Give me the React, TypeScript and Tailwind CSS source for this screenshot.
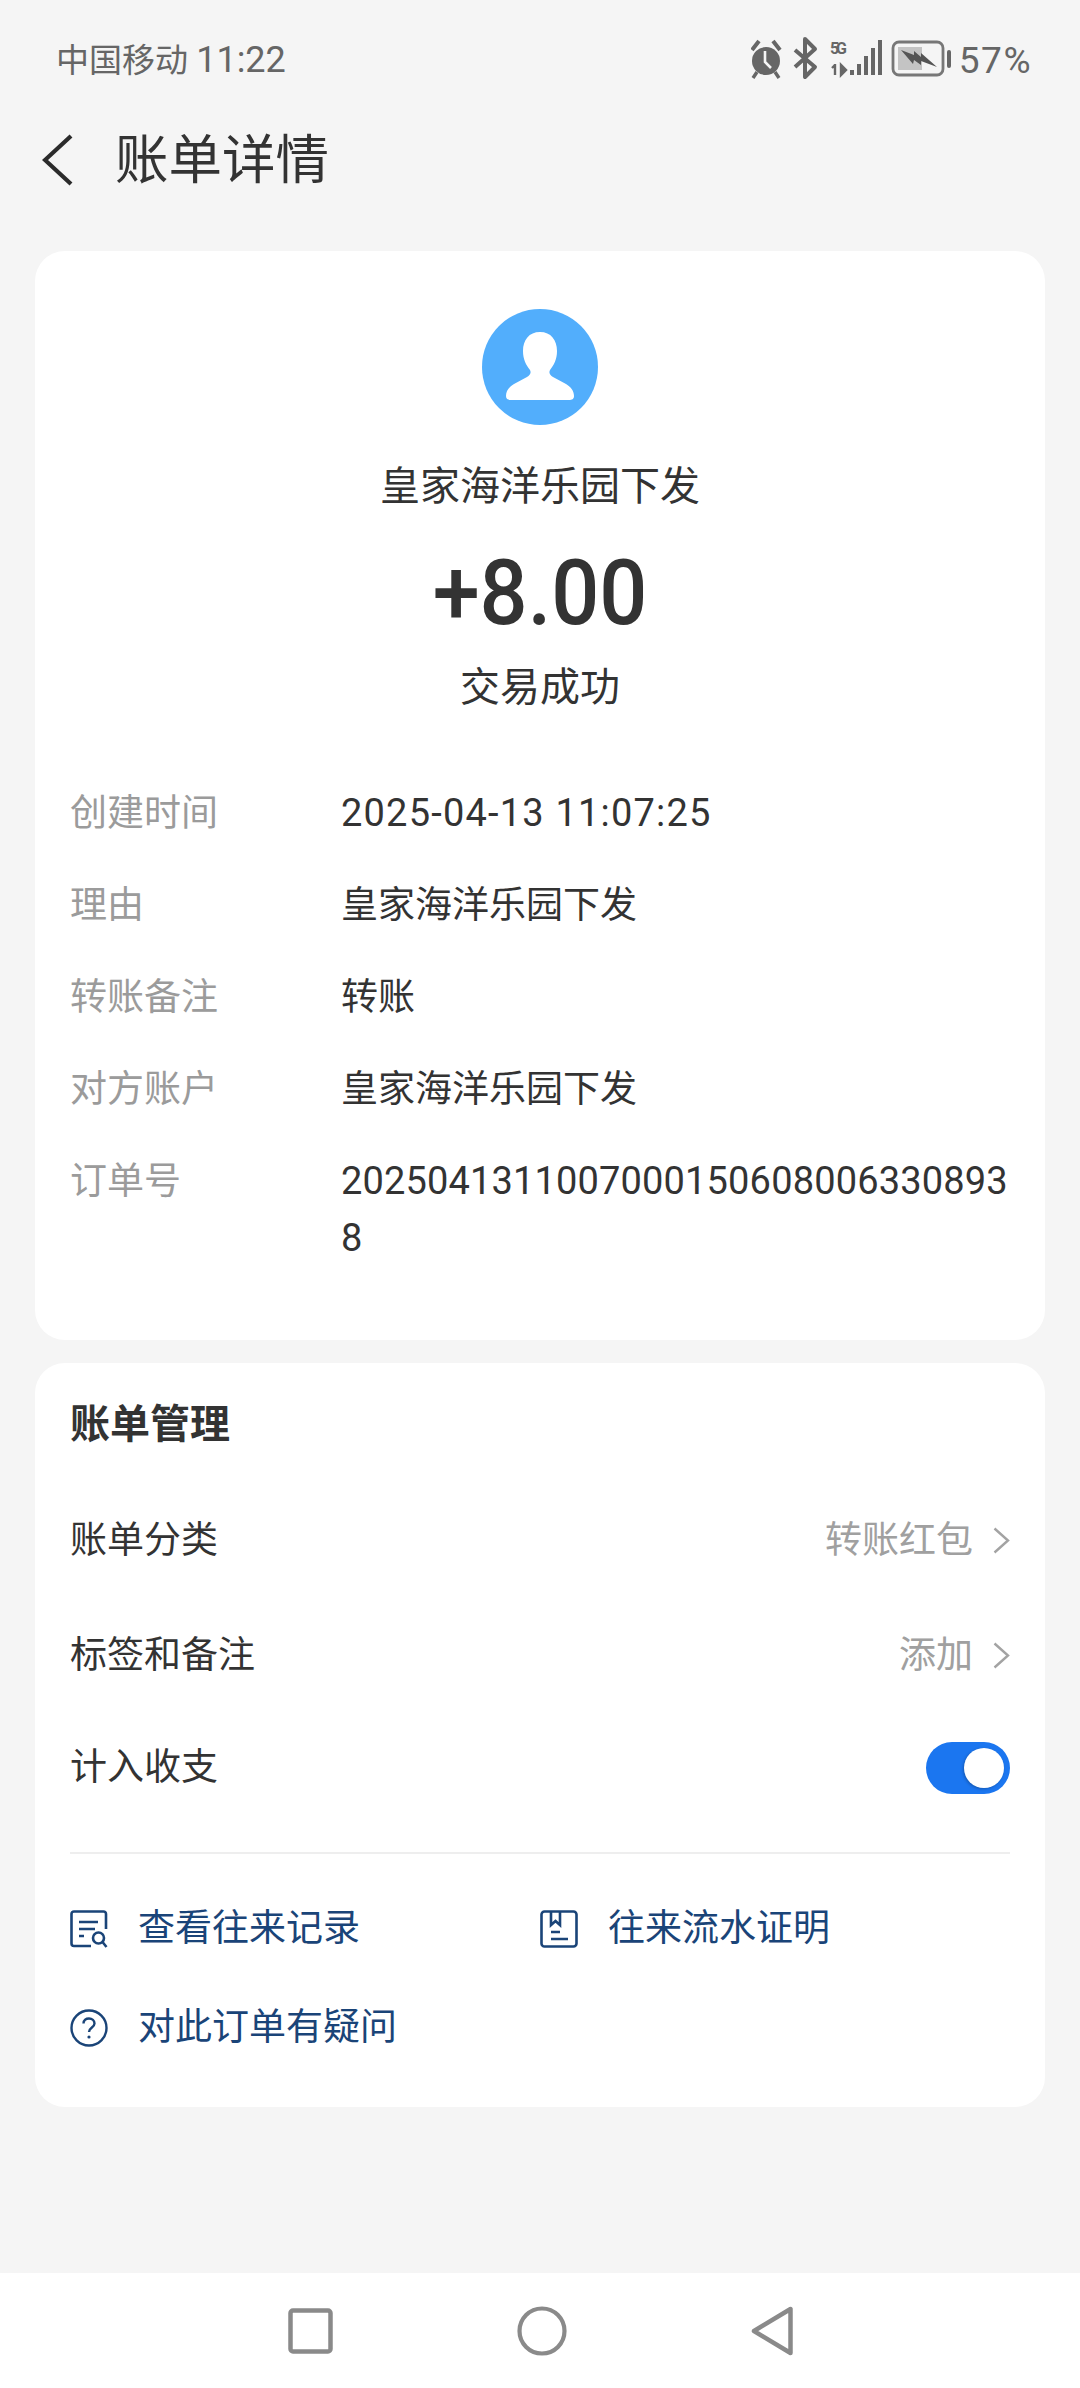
const font = { fontFamily: '"Roboto","Noto Sans CJK SC",sans-serif' };

function Chevron() {
  return (
    <svg width="17" height="27" viewBox="0 0 17 27" fill="none" stroke="#a3a3a3" strokeWidth="2.4" className="ml-[20px]">
      <path d="M1.5 1.5 L15 13.5 L1.5 25.5" />
    </svg>
  );
}

function Row({ label, children }: { label: string; children: React.ReactNode }) {
  return (
    <div className="flex items-start">
      <div className="w-[271px] shrink-0 text-[#9b9b9b]">{label}</div>
      <div className="w-[672px] break-all text-[#333]">{children}</div>
    </div>
  );
}

function StatusIcons() {
  return (
    <svg width="202" height="46" viewBox="0 0 202 46" className="shrink-0">
      <g fill="#666" stroke="#666">
        <circle cx="15" cy="24" r="14" stroke="none" />
        <path d="M1 13 L8 4 M29 13 L22 4" strokeWidth="4" fill="none" />
        <path d="M6 35 L2 41 M24 35 L28 41" strokeWidth="3.4" fill="none" />
      </g>
      <path d="M14 14 V25 L20 31" stroke="#f5f5f5" strokeWidth="2.6" fill="none" />
      <path d="M44 13 L64 30 L54 40 V2 L64 12 L44 30" stroke="#666" strokeWidth="4" fill="none" strokeLinejoin="round" />
      <text x="79" y="17" fontSize="16" fontWeight="700" fill="#666" fontFamily="Roboto,sans-serif" textLength="17">5G</text>
      <path d="M84 28 L81 31 M84 27 V38 M90 28 V38 L95 33 Z" stroke="#666" strokeWidth="2.4" fill="#666" />
      <g fill="#666">
        <rect x="99" y="33" width="4" height="5" />
        <rect x="106" y="27" width="4" height="11" />
        <rect x="113" y="19" width="4" height="19" />
        <rect x="120" y="11" width="4" height="27" />
        <rect x="127" y="3" width="4" height="35" />
      </g>
      <rect x="142" y="5" width="50" height="33" rx="6" fill="none" stroke="#777" strokeWidth="2.8" />
      <rect x="147" y="10" width="24" height="23" fill="#c4c4c4" />
      <path d="M150 13 L163 18 L163 14 L170 20 L170 16 L186 30 L170 24 L170 28 L163 23 L162 27 Z" fill="#555" />
      <rect x="196" y="13" width="4" height="18" rx="2" fill="#666" />
    </svg>
  );
}

function PersonAvatar() {
  return (
    <svg width="116" height="116" viewBox="0 0 116 116" className="block mx-auto">
      <circle cx="58" cy="58" r="58" fill="#52aefc" />
      <path
        d="M58 23 C47 23 41 31 41 42 C41 50 44 56 48 61 C49.500 64 48 66 45 68 L32 75 C27 78 24 82 24 87 C24 90 26 91 29 91 H87 C90 91 92 90 92 87 C92 82 89 78 84 75 L71 68 C68 66 66.500 64 68 61 C72 56 75 50 75 42 C75 31 69 23 58 23 Z"
        fill="#fff"
      />
    </svg>
  );
}

function RecordIcon() {
  return (
    <svg width="38" height="38" viewBox="0 0 38 38" fill="none" stroke="#1a4478" strokeWidth="2.6" className="shrink-0">
      <path d="M36 19 V4 C36 2.500 35 1.500 33.500 1.500 H4 C2.500 1.500 1.500 2.500 1.500 4 V33.500 C1.500 35 2.500 36 4 36 H21" />
      <path d="M9 12 H28 M9 19 H25 M9 26 H14" />
      <circle cx="28.500" cy="28" r="5.500" />
      <path d="M32.500 32 L36.500 37" />
    </svg>
  );
}

function ProofIcon() {
  return (
    <svg width="38" height="38" viewBox="0 0 38 38" fill="none" stroke="#1a4478" strokeWidth="2.6" className="shrink-0">
      <rect x="1.500" y="1.500" width="35" height="35" rx="3" />
      <path d="M11 2 V15 L15.500 11 L20 15 V2" />
      <path d="M11 22 H20 M11 29 H28" />
    </svg>
  );
}

function HelpIcon() {
  return (
    <svg width="38" height="38" viewBox="0 0 38 38" fill="none" stroke="#1a4478" strokeWidth="2.4" className="shrink-0">
      <circle cx="19" cy="19" r="17.500" />
      <path d="M13.500 14.500 C13.500 11 16 9.500 19 9.500 C22 9.500 24.500 11.500 24.500 14.500 C24.500 18.500 19 18.500 19 23" />
      <circle cx="19" cy="28" r="1.600" fill="#1a4478" stroke="none" />
    </svg>
  );
}

export default function App() {
  return (
    <div className="flex h-[2388px] w-[1080px] flex-col overflow-hidden bg-[#f5f5f5] text-[37px] leading-[57px]" style={font}>
      <div className="flex h-[110px] shrink-0 items-center justify-between pl-[56px] pr-[48px] pt-[10px] text-[33px] text-[#666]">
        <span>中国移动 <span className="text-[36px]">11:22</span></span>
        <div className="flex items-center gap-[6px]">
          <StatusIcons />
          <span className="text-[37px] tracking-[1.5px]">57%</span>
        </div>
      </div>

      <div className="flex h-[100px] shrink-0 items-center pl-[42px] text-[#333]">
        <svg width="32" height="52" viewBox="0 0 32 52" fill="none" stroke="#2b2b2b" strokeWidth="4.200">
          <path d="M29 2 L3 26 L29 50" />
        </svg>
        <span className="ml-[41px] text-[53.500px]">账单详情</span>
      </div>

      <main className="mx-[35px] mt-[41px] flex flex-col gap-[23px]">
        <section className="rounded-[30px] bg-white pb-[73px] pt-[58px]">
          <PersonAvatar />
          <div className="mt-[32px] text-center text-[40px] leading-[60px] text-[#333]">皇家海洋乐园下发</div>
          <div className="mt-[27px] scale-x-[0.94] text-center text-[90px] font-medium leading-[100px] text-[#333]">+8.00</div>
          <div className="mt-[14px] text-center text-[40px] leading-[60px] text-[#333]">交易成功</div>
          <div className="mt-[67px] flex flex-col gap-[35px] px-[35px]">
            <Row label="创建时间"><span className="text-[38px] tracking-[1.2px]">2025-04-13 11:07:25</span></Row>
            <Row label="理由">皇家海洋乐园下发</Row>
            <Row label="转账备注">转账</Row>
            <Row label="对方账户">皇家海洋乐园下发</Row>
            <Row label="订单号"><span className="text-[38px] tracking-[0.15px]">20250413110070001506080063308938</span></Row>
          </div>
        </section>

        <section className="h-[744px] rounded-[30px] bg-white px-[35px] pt-[32px] text-[#333]">
          <div className="text-[40px] font-bold leading-[60px]">账单管理</div>
          <div className="mt-[57px] flex h-[57px] items-center justify-between">
            <span>账单分类</span>
            <span className="flex items-center text-[#a0a0a0]">转账红包<Chevron /></span>
          </div>
          <div className="mt-[58px] flex h-[57px] items-center justify-between">
            <span>标签和备注</span>
            <span className="flex items-center text-[#a0a0a0]">添加<Chevron /></span>
          </div>
          <div className="mt-[55px] flex h-[57px] items-center justify-between">
            <span>计入收支</span>
            <div className="flex h-[52px] w-[84px] items-center justify-end rounded-full bg-[#1b76f0] pr-[6px]">
              <div className="h-[40px] w-[40px] rounded-full bg-white shadow-[-1px_1px_3px_rgba(0,0,0,0.25)]" />
            </div>
          </div>
          <div className="mt-[56px] h-[2px] bg-[#eeeeee]" />
          <div className="mt-[46px] grid grid-cols-2 gap-y-[42px] text-[#1a4478]">
            <div className="flex h-[57px] items-center gap-[30px]"><RecordIcon />查看往来记录</div>
            <div className="flex h-[57px] items-center gap-[30px]"><ProofIcon />往来流水证明</div>
            <div className="flex h-[57px] items-center gap-[30px]"><HelpIcon />对此订单有疑问</div>
          </div>
        </section>
      </main>

      <nav className="mt-auto flex h-[115px] shrink-0 items-center justify-center gap-[184px] bg-white">
        <svg width="45" height="46" viewBox="0 0 45 46" fill="none" stroke="#8a8a8a" strokeWidth="4.500">
          <rect x="2.500" y="2.500" width="40" height="41" rx="2.500" />
        </svg>
        <svg width="50" height="50" viewBox="0 0 50 50" fill="none" stroke="#8a8a8a" strokeWidth="4.200">
          <circle cx="25" cy="25" r="22.500" />
        </svg>
        <svg width="42" height="50" viewBox="0 0 42 50" fill="none" stroke="#8a8a8a" strokeWidth="4.500" strokeLinejoin="round">
          <path d="M39.500 3 V47 L3 25 Z" />
        </svg>
      </nav>
    </div>
  );
}
